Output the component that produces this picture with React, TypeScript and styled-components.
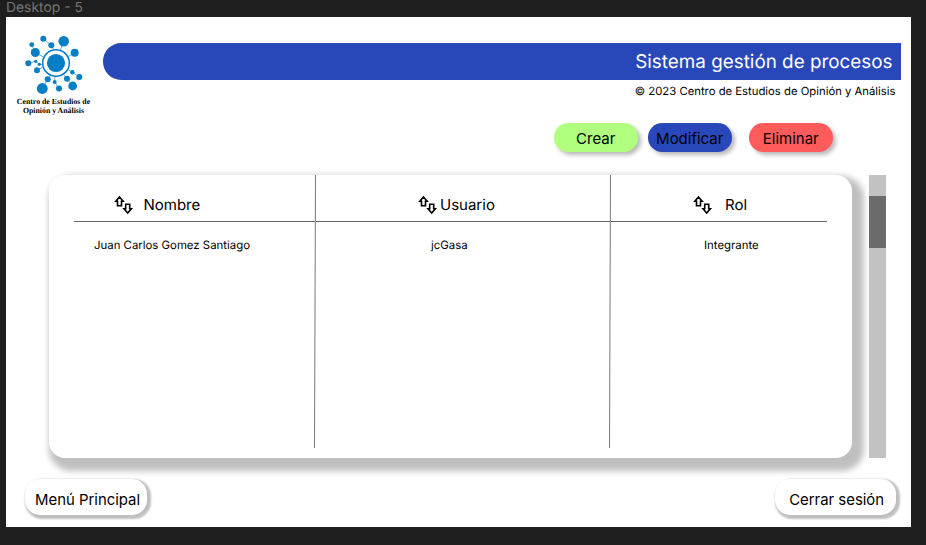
import React from "react";
import styled, { createGlobalStyle } from "styled-components";

const GlobalStyle = createGlobalStyle`
  * { box-sizing: border-box; }
  html, body { margin: 0; height: 100%; overflow: hidden; background: #1e1e1e; }
  button { font: inherit; border: 0; padding: 0; cursor: pointer; }
`;

const Canvas = styled.div`
  width: 926px;
  height: 545px;
  padding-left: 6px;
  background: #1e1e1e;
  color: #000;
  font-family: Inter, "Liberation Sans", sans-serif;
  text-rendering: geometricPrecision;
`;

const FrameLabel = styled.div`
  height: 17.3px;
  font-size: 13.9px;
  line-height: 17px;
  color: #757575;
`;

const Frame = styled.main`
  display: flex;
  flex-direction: column;
  width: 904.7px;
  height: 509.3px;
  background: #fff;
`;

const Header = styled.header`
  display: flex;
  height: 106px;
`;

const Brand = styled.div`
  width: 97px;
  padding-top: 15.7px;
`;

const LogoMark = styled.svg`
  display: block;
  width: 64px;
  height: 64px;
  margin-left: 17px;
`;

const BrandName = styled.div`
  width: 95px;
  margin-top: 0.2px;
  font: bold 7.8px/9px "Liberation Serif", serif;
  text-align: center;
  white-space: nowrap;
`;

const Heading = styled.div`
  width: 798px;
  padding-top: 26.2px;
`;

const TitleBar = styled.h1`
  height: 36.5px;
  margin: 0;
  padding-right: 8.5px;
  border-radius: 18.25px 0 0 18.25px;
  background: #2848b9;
  color: #fff;
  font-size: 18.85px;
  font-weight: 400;
  line-height: 37.5px;
  text-align: right;
`;

const Copyright = styled.div`
  padding: 4px 5.5px 0 0;
  font-size: 11.3px;
  line-height: 15px;
  text-align: right;
`;

const Actions = styled.div`
  display: flex;
  margin-left: 547.5px;
  height: 52px;
  padding-top: 0.2px;
`;

const Action = styled.button<{ $color: string; $gap: number }>`
  width: 84.5px;
  height: 28.5px;
  margin-right: ${(p) => p.$gap}px;
  padding-top: 2.5px;
  border-radius: 14.25px;
  background: ${(p) => p.$color};
  box-shadow: 3px 3px 4px rgba(0, 0, 0, 0.28);
  font-size: 15px !important;
  line-height: 26px;
`;

const Content = styled.section`
  display: flex;
  height: 283px;
  padding-left: 43px;
`;

const Table = styled.div`
  display: grid;
  grid-template-columns: 266px 1px 294px 1px 240.7px;
  width: 802.7px;
  border-radius: 16px;
  background: #fff;
  box-shadow: 6px 7px 6px 6px rgba(0, 0, 0, 0.25);
`;

const Column = styled.div<{ $left?: number; $right?: number }>`
  padding: 0 ${(p) => p.$right ?? 0}px 0 ${(p) => p.$left ?? 0}px;
`;

const ColumnHead = styled.div<{ $indent: number; $gap: number }>`
  display: flex;
  align-items: center;
  height: 46.7px;
  padding: 14px 0 0 ${(p) => p.$indent}px;
  gap: ${(p) => p.$gap}px;
  border-bottom: 1px solid #666;
  font-size: 15px;
  line-height: 20px;
`;

const Cell = styled.div<{ $indent: number }>`
  padding: 16.5px 0 0 ${(p) => p.$indent}px;
  font-size: 11.4px;
  line-height: 15px;
  white-space: nowrap;
`;

const Divider = styled.div`
  width: 1px;
  height: 272.5px;
  background: #777;
  transform: translateX(-0.5px) rotate(0.2deg);
`;

const SortIcon = styled.svg`
  width: 20px;
  height: 20px;
  flex: none;
`;

const ScrollTrack = styled.div`
  width: 17px;
  height: 283px;
  margin-left: 17.3px;
  padding-top: 20.4px;
  background: #c2c2c2;
`;

const ScrollThumb = styled.div`
  height: 52px;
  background: #6b6b6b;
`;

const Footer = styled.footer`
  display: flex;
  justify-content: space-between;
  padding: 21.2px 14.7px 0 19px;
`;

const FooterButton = styled.button<{ $pad: number }>`
  width: 121.5px;
  height: 35.3px;
  padding: 5.3px 0 0 ${(p) => p.$pad}px;
  border-radius: 15px;
  background: #fff;
  box-shadow: 2px 2px 2px 2px rgba(0, 0, 0, 0.25);
  font-size: 14.9px !important;
  line-height: 30px;
  text-align: left;
  white-space: nowrap;
`;

const dots: [number, number, number][] = [
  [43.3, 38.7, 3], [51.3, 45.3, 3], [63.7, 41.3, 5.3], [31.7, 44.7, 2.4],
  [35.3, 52.5, 4.5], [74.7, 52.8, 4], [28.3, 63.3, 3], [35.7, 61.3, 1.6],
  [39.3, 64.3, 1.6], [37, 70.3, 3], [72.3, 72.2, 2.2], [79.3, 77, 3],
  [67, 78.8, 3], [72.7, 86, 4.4], [59, 88.5, 3], [54.7, 82, 2],
  [47.7, 79.3, 3], [42.3, 88.5, 5.4],
];

const Logo = () => (
  <LogoMark viewBox="23 33 64 64" fill="#047fc6">
    <path
      d="M43.3 38.7 51.3 45.3 54 50M63.7 41.3 60 51M31.7 44.7 35.3 52.5 45 58M74.7 52.8 67 57M28.3 63.3 35.7 61.3 39.3 64.3H43M37 70.3 44 67M79.3 77 72.3 72.2 67 69M72.7 86 67 78.8 63 74M59 88.5 54.7 82 55 76M42.3 88.5 47.7 79.3 51 75"
      fill="none"
      stroke="#047fc6"
      strokeWidth=".6"
    />
    <circle cx="56" cy="63" r="13.3" fill="#fff" stroke="#047fc6" strokeWidth="1.5" />
    <circle cx="56" cy="63" r="9.1" />
    {dots.map(([x, y, r]) => (
      <circle key={`${x}-${y}`} cx={x} cy={y} r={r} />
    ))}
  </LogoMark>
);

const SortArrows = () => (
  <SortIcon viewBox="0 0 20 20" fill="none" stroke="#000" strokeWidth="1.6">
    <path d="M5.5 1.9 9.2 6.3H7.5V10.7H3.5V6.3H1.8Z" />
    <path d="M13.7 18.1 10 13.7H11.7V9.3H15.7V13.7H17.4Z" />
  </SortIcon>
);

export default function App() {
  return (
    <>
      <GlobalStyle />
      <Canvas>
        <FrameLabel>Desktop - 5</FrameLabel>
        <Frame>
          <Header>
            <Brand>
              <Logo />
              <BrandName>
                Centro de Estudios de
                <br />
                Opinión y Análisis
              </BrandName>
            </Brand>
            <Heading>
              <TitleBar>Sistema gestión de procesos</TitleBar>
              <Copyright>© 2023 Centro de Estudios de Opinión y Análisis</Copyright>
            </Heading>
          </Header>
          <Actions>
            <Action $color="#b0ff7e" $gap={9.5}>Crear</Action>
            <Action $color="#2848b9" $gap={16.5}>Modificar</Action>
            <Action $color="#ff5b5b" $gap={0}>Eliminar</Action>
          </Actions>
          <Content>
            <Table>
              <Column $left={25}>
                <ColumnHead $indent={40} $gap={9.5}><SortArrows />Nombre</ColumnHead>
                <Cell $indent={20}>Juan Carlos Gomez Santiago</Cell>
              </Column>
              <Divider />
              <Column>
                <ColumnHead $indent={102} $gap={2}><SortArrows />Usuario</ColumnHead>
                <Cell $indent={115}>jcGasa</Cell>
              </Column>
              <Divider />
              <Column $right={25}>
                <ColumnHead $indent={82} $gap={12}><SortArrows />Rol</ColumnHead>
                <Cell $indent={93}>Integrante</Cell>
              </Column>
            </Table>
            <ScrollTrack>
              <ScrollThumb />
            </ScrollTrack>
          </Content>
          <Footer>
            <FooterButton $pad={10}>Menú Principal</FooterButton>
            <FooterButton $pad={14.7}>Cerrar sesión</FooterButton>
          </Footer>
        </Frame>
      </Canvas>
    </>
  );
}
